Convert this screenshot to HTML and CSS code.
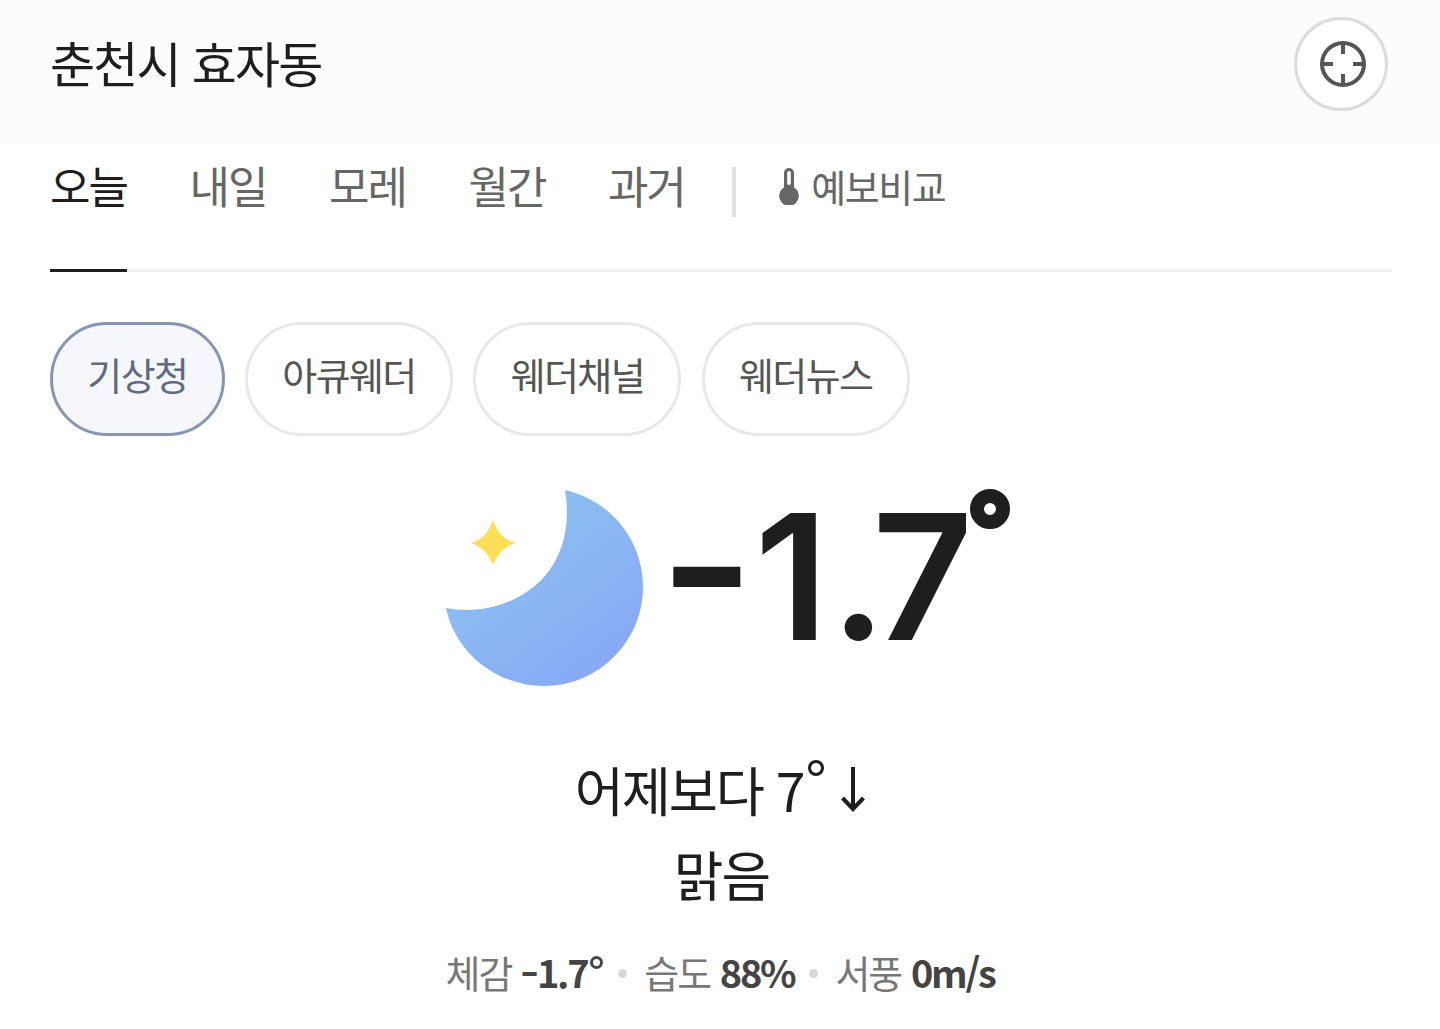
FILE: index.html
```html
<!DOCTYPE html>
<html lang="ko">
<head>
    <meta charset="UTF-8">
    <title>춘천시 효자동 날씨</title>
    <link rel="stylesheet" href="styles.css">
</head>
<body>
    <header class="top-bar">
        <h1 class="location">춘천시 효자동</h1>
        <button class="locate-btn" type="button">
            <svg class="locate-icon" viewBox="0 0 48 48" width="48" height="48" fill="none" stroke="#555" stroke-width="4">
                <circle cx="24" cy="24" r="21"/>
                <path d="M24 3V14M24 34V45M3 24H14M34 24H45"/>
            </svg>
        </button>
    </header>

    <nav class="tabs">
        <a class="tab active">오늘</a>
        <a class="tab">내일</a>
        <a class="tab">모레</a>
        <a class="tab">월간</a>
        <a class="tab">과거</a>
        <span class="tab-divider"></span>
        <a class="compare">
            <svg class="thermo" viewBox="0 0 20 38" width="20" height="38">
                <path d="M10 1a5 5 0 0 1 5 5v14.5a9.8 9.8 0 1 1-10 0V6a5 5 0 0 1 5-5z" fill="#666"/>
                <rect x="8.2" y="4" width="3.6" height="14" rx="1.8" fill="#fff"/>
            </svg>
            예보비교
        </a>
    </nav>

    <div class="chips">
        <button class="chip selected" type="button">기상청</button>
        <button class="chip" type="button">아큐웨더</button>
        <button class="chip" type="button">웨더채널</button>
        <button class="chip" type="button">웨더뉴스</button>
    </div>

    <section class="current">
        <svg class="moon" viewBox="0 0 200 200" width="200" height="200">
            <defs>
                <linearGradient id="moonFill" x1="0.3" y1="0.3" x2="0.8" y2="0.95">
                    <stop offset="0" stop-color="#8bbdf0"/>
                    <stop offset="1" stop-color="#88a8f6"/>
                </linearGradient>
            </defs>
            <path d="M120 1C170 13 198 55 198 98C198 152 154 197 99 197C51 197 10 163 1 119C56 130 135 95 120 1Z" fill="url(#moonFill)"/>
            <path d="M48 31C53 45 59 50 71 54C59 58 53 64 48 76C43 64 37 58 26 54C37 50 43 45 48 31Z" fill="#fadf57"/>
        </svg>
        <div class="temp"><span class="temp-minus">-</span>1<span class="temp-dot">.</span>7<span class="temp-deg"></span></div>
    </section>

    <p class="compare-line">어제보다 7<span class="small-deg"></span><svg class="arrow" viewBox="0 0 24 46" width="24" height="46" fill="none" stroke="#1e1e1e" stroke-width="4"><path d="M12 1V43M1.5 32L12 43L22.5 32"/></svg></p>
    <p class="condition">맑음</p>

    <ul class="details">
        <li>체감 <b><span class="detail-minus">-</span>1.7<span class="tiny-deg"></span></b></li>
        <li>습도 <b>88%</b></li>
        <li>서풍 <b>0m/s</b></li>
    </ul>
</body>
</html>
```

FILE: styles.css
```css
* {
    margin: 0;
    padding: 0;
    box-sizing: border-box;
}

body {
    font-family: "Noto Sans CJK KR", "Noto Sans", sans-serif;
    color: #1e1e1e;
    background: #fff;
    height: 1029px;
    overflow: hidden;
}

/* 상단 위치 */
.top-bar {
    display: flex;
    align-items: center;
    justify-content: space-between;
    height: 143px;
    padding: 0 52px 15px 50px;
    background: #fcfcfd;
}

.location {
    padding-bottom: 3px;
    font-size: 49px;
    font-weight: 400;
    letter-spacing: -1.8px;
    line-height: 1.2;
}

.locate-btn {
    display: flex;
    align-items: center;
    justify-content: center;
    width: 94px;
    height: 94px;
    padding-left: 4px;
    background: #fff;
    border: 3px solid #dcdcdc;
    border-radius: 50%;
}

/* 탭 */
.tabs {
    display: flex;
    align-items: flex-start;
    height: 129px;
    margin: 0 48px 0 50px;
    border-bottom: 3px solid #f0f0f0;
}

.tab {
    position: relative;
    height: 126px;
    margin-right: 62.5px;
    padding-top: 10px;
    font-size: 44px;
    letter-spacing: -2px;
    line-height: 64px;
    color: #666;
}

.tab.active {
    color: #1e1e1e;
}

.tab.active::after {
    content: "";
    position: absolute;
    left: 0;
    right: 0;
    bottom: -3px;
    height: 3px;
    background: #1e1e1e;
}

.tab-divider {
    width: 4px;
    height: 50px;
    margin: 24px 0 0 -15px;
    background: #e0e0e0;
}

.compare {
    display: flex;
    align-items: center;
    gap: 12px;
    margin: 22px 0 0 43px;
    font-size: 38px;
    letter-spacing: -1.5px;
    line-height: 42px;
    color: #666;
}

/* 제공사 칩 */
.chips {
    display: flex;
    gap: 20.3px;
    padding: 50px 0 0 50px;
}

.chip {
    height: 114px;
    padding: 0 34.3px 11px;
    font-family: inherit;
    font-size: 38px;
    letter-spacing: -1.6px;
    color: #555;
    background: #fff;
    border: 3px solid #e8e8e8;
    border-radius: 57px;
}

.chip.selected {
    color: #5f6b85;
    background: #f5f7fa;
    border-color: #8695b3;
}

/* 현재 기온 */
.current {
    display: flex;
    align-items: flex-start;
    margin-top: 53px;
    padding-left: 445px;
}

.moon {
    flex-shrink: 0;
    margin-right: 27px;
}

.temp {
    position: relative;
    margin-top: -1px;
    padding-right: 43px;
    font-family: Inter, "Noto Sans", sans-serif;
    font-size: 175px;
    font-weight: 600;
    letter-spacing: -6px;
    line-height: 176px;
}

.temp-minus {
    display: inline-block;
    margin-right: 7px;
    transform: translateY(-11px) scale(1.17, 1.1);
    transform-origin: right center;
}

.temp-dot {
    margin-left: 8px;
    letter-spacing: -14px;
}

.temp-deg {
    position: absolute;
    top: 1px;
    right: 0;
    width: 40px;
    height: 40px;
    border: 14px solid #1e1e1e;
    border-radius: 50%;
}

.compare-line {
    display: flex;
    align-items: center;
    justify-content: center;
    margin-top: 62px;
    font-size: 53.5px;
    letter-spacing: -2.2px;
    line-height: 76px;
    text-align: center;
}

.small-deg {
    width: 16px;
    height: 16px;
    margin: -42px 17px 0 5px;
    border: 3px solid #1e1e1e;
    border-radius: 50%;
}

.condition {
    margin-top: 9px;
    padding-left: 3px;
    font-size: 54px;
    letter-spacing: -2px;
    line-height: 76px;
    text-align: center;
}

.details {
    display: flex;
    justify-content: center;
    gap: 41px;
    margin-top: 32px;
    list-style: none;
    font-size: 38px;
    letter-spacing: -2px;
    line-height: 56px;
    color: #777;
}

.details li {
    position: relative;
}

.details li + li::before {
    content: "";
    position: absolute;
    left: -26px;
    top: 25px;
    width: 9px;
    height: 9px;
    background: #d8d8d8;
    border-radius: 50%;
}

.details b {
    margin-left: 1px;
    font-weight: 700;
    letter-spacing: -2.3px;
    color: #444;
}

.detail-minus {
    display: inline-block;
    margin: 0 3px 0 1px;
    transform: scaleX(1.35);
}

.tiny-deg {
    display: inline-block;
    width: 13px;
    height: 13px;
    margin-left: 3px;
    vertical-align: 19px;
    border: 3px solid #444;
    border-radius: 50%;
}
```
